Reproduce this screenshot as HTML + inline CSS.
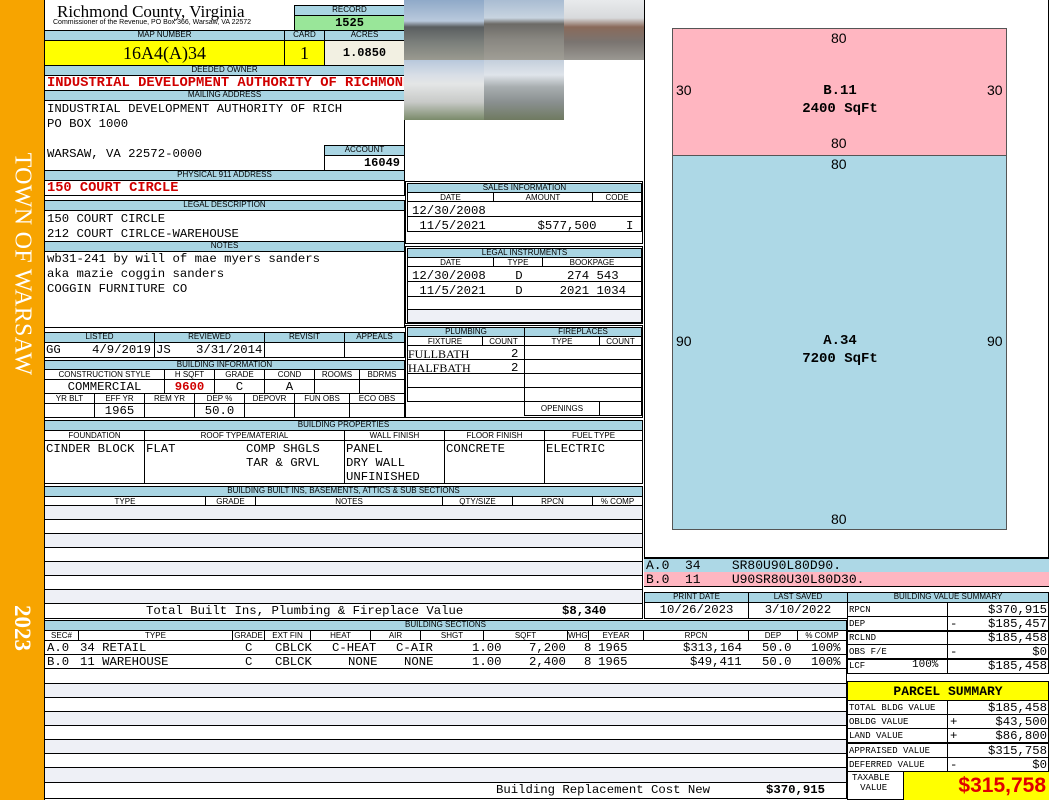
<!DOCTYPE html>
<html><head><meta charset="utf-8"><style>
*{margin:0;padding:0;box-sizing:border-box}
body{width:1050px;height:800px;position:relative;background:#fff;overflow:hidden;font-family:"Liberation Mono",monospace;color:#000}
.a{position:absolute}
.h{position:absolute;background:#a9d5e3;border:1px solid #000;font:8px "Liberation Sans",sans-serif;text-align:center;line-height:8px;white-space:nowrap;overflow:hidden}
.b{position:absolute;border:1px solid #000;background:#fff}
.s{font:8px 'Liberation Sans',sans-serif;text-align:center;line-height:9px}
.t{position:absolute;font:12.3px "Liberation Mono",monospace;white-space:pre;line-height:13px}
.r{color:#d00000;font-weight:bold}
.alt{background:#eef0f6}
.sk{font:14px "Liberation Sans",sans-serif;position:absolute}
.v{position:absolute;font:12.3px "Liberation Mono",monospace;white-space:pre;line-height:14px}
.hl{position:absolute;height:1px;background:#000}
.vl{position:absolute;width:1px;background:#000}
</style></head><body>
<div class="a" style="left:0;top:0;width:44px;height:800px;background:#f7a400"></div>
<div class="a" style="left:22px;top:264px;transform:translate(-50%,-50%) rotate(90deg);color:#fff;font:24px 'Liberation Serif',serif;white-space:nowrap;letter-spacing:0.3px">TOWN OF WARSAW</div>
<div class="a" style="left:22px;top:628px;transform:translate(-50%,-50%) rotate(90deg);color:#fff;font:bold 23px 'Liberation Serif',serif">2023</div>
<div class="a" style="left:44px;top:0;width:1px;height:800px;background:#000"></div>

<div class="a" style="left:57px;top:2px;font:17px 'Liberation Serif',serif;line-height:19px">Richmond County, Virginia</div>
<div class="a" style="left:53px;top:19px;font:7px 'Liberation Sans',sans-serif">Commissioner of the Revenue, PO Box 366, Warsaw, VA 22572</div>
<div class="h" style="left:294px;top:5px;width:111px;height:11px">RECORD</div>
<div class="a" style="left:294px;top:15px;width:111px;height:16px;background:#99e699;border:1px solid #000;font:bold 12px 'Liberation Mono';text-align:center;line-height:14px">1525</div>

<div class="h" style="left:44px;top:30px;width:241px;height:11px">MAP NUMBER</div>
<div class="h" style="left:284px;top:30px;width:41px;height:11px">CARD</div>
<div class="h" style="left:324px;top:30px;width:81px;height:11px">ACRES</div>
<div class="a" style="left:44px;top:40px;width:241px;height:26px;background:#ffff00;border:1px solid #000;font:18px 'Liberation Serif',serif;text-align:center;line-height:24px">16A4(A)34</div>
<div class="a" style="left:284px;top:40px;width:41px;height:26px;background:#ffff00;border:1px solid #000;font:18px 'Liberation Serif',serif;text-align:center;line-height:24px">1</div>
<div class="a" style="left:324px;top:40px;width:81px;height:26px;background:#f2f0e2;border:1px solid #000;font:bold 12px 'Liberation Mono';text-align:center;line-height:24px">1.0850</div>

<div class="h" style="left:44px;top:65px;width:361px;height:11px">DEEDED OWNER</div>
<div class="b" style="left:44px;top:75px;width:361px;height:16px;overflow:hidden"><div class="t r" style="left:2px;top:1px;font-size:13.8px">INDUSTRIAL DEVELOPMENT AUTHORITY OF RICHMOND</div></div>
<div class="h" style="left:44px;top:90px;width:361px;height:11px">MAILING ADDRESS</div>
<div class="b" style="left:44px;top:100px;width:361px;height:71px"></div>
<div class="t" style="left:47px;top:102px;line-height:15px">INDUSTRIAL DEVELOPMENT AUTHORITY OF RICH
PO BOX 1000

WARSAW, VA 22572-0000</div>
<div class="h" style="left:324px;top:145px;width:81px;height:11px">ACCOUNT</div>
<div class="b" style="left:324px;top:155px;width:81px;height:16px;font:bold 12px 'Liberation Mono';text-align:right;padding-right:4px;line-height:14px">16049</div>
<div class="h" style="left:44px;top:170px;width:361px;height:11px">PHYSICAL 911 ADDRESS</div>
<div class="b" style="left:44px;top:180px;width:361px;height:16px"><div class="t r" style="left:2px;top:1px;font-size:13.7px">150 COURT CIRCLE</div></div>

<div class="h" style="left:44px;top:200px;width:361px;height:11px">LEGAL DESCRIPTION</div>
<div class="b" style="left:44px;top:210px;width:361px;height:32px"></div>
<div class="t" style="left:47px;top:212px;line-height:15px">150 COURT CIRCLE
212 COURT CIRLCE-WAREHOUSE</div>
<div class="h" style="left:44px;top:241px;width:361px;height:11px">NOTES</div>
<div class="b" style="left:44px;top:251px;width:361px;height:77px"></div>
<div class="t" style="left:47px;top:252px;line-height:15px">wb31-241 by will of mae myers sanders
aka mazie coggin sanders
COGGIN FURNITURE CO</div>

<div class="h" style="left:44px;top:332px;width:111px;height:11px">LISTED</div>
<div class="h" style="left:154px;top:332px;width:111px;height:11px">REVIEWED</div>
<div class="h" style="left:264px;top:332px;width:81px;height:11px">REVISIT</div>
<div class="h" style="left:344px;top:332px;width:61px;height:11px">APPEALS</div>
<div class="b" style="left:44px;top:342px;width:111px;height:16px"></div>
<div class="b" style="left:154px;top:342px;width:111px;height:16px"></div>
<div class="b" style="left:264px;top:342px;width:81px;height:16px"></div>
<div class="b" style="left:344px;top:342px;width:61px;height:16px"></div>
<div class="t" style="left:46px;top:344px">GG</div>
<div class="t" style="left:92px;top:344px">4/9/2019</div>
<div class="t" style="left:156px;top:344px">JS</div>
<div class="t" style="left:196px;top:344px">3/31/2014</div>

<div class="h" style="left:44px;top:360px;width:361px;height:10px">BUILDING INFORMATION</div>
<div class="b s" style="left:44px;top:369px;width:121px;height:11px">CONSTRUCTION STYLE</div>
<div class="b s" style="left:164px;top:369px;width:51px;height:11px">H SQFT</div>
<div class="b s" style="left:214px;top:369px;width:51px;height:11px">GRADE</div>
<div class="b s" style="left:264px;top:369px;width:51px;height:11px">COND</div>
<div class="b s" style="left:314px;top:369px;width:46px;height:11px">ROOMS</div>
<div class="b s" style="left:359px;top:369px;width:46px;height:11px">BDRMS</div>
<div class="b" style="left:44px;top:379px;width:121px;height:15px;font:12.3px 'Liberation Mono';text-align:center">COMMERCIAL</div>
<div class="b r" style="left:164px;top:379px;width:51px;height:15px;font:bold 12.3px 'Liberation Mono';text-align:center">9600</div>
<div class="b" style="left:214px;top:379px;width:51px;height:15px;font:12.3px 'Liberation Mono';text-align:center">C</div>
<div class="b" style="left:264px;top:379px;width:51px;height:15px;font:12.3px 'Liberation Mono';text-align:center">A</div>
<div class="b" style="left:314px;top:379px;width:46px;height:15px"></div>
<div class="b" style="left:359px;top:379px;width:46px;height:15px"></div>
<div class="b s" style="left:44px;top:393px;width:51px;height:11px">YR BLT</div>
<div class="b s" style="left:94px;top:393px;width:51px;height:11px">EFF YR</div>
<div class="b s" style="left:144px;top:393px;width:51px;height:11px">REM YR</div>
<div class="b s" style="left:194px;top:393px;width:51px;height:11px">DEP %</div>
<div class="b s" style="left:244px;top:393px;width:51px;height:11px">DEPOVR</div>
<div class="b s" style="left:294px;top:393px;width:56px;height:11px">FUN OBS</div>
<div class="b s" style="left:349px;top:393px;width:56px;height:11px">ECO OBS</div>
<div class="b" style="left:44px;top:403px;width:51px;height:15px"></div>
<div class="b" style="left:94px;top:403px;width:51px;height:15px;font:12.3px 'Liberation Mono';text-align:center">1965</div>
<div class="b" style="left:144px;top:403px;width:51px;height:15px"></div>
<div class="b" style="left:194px;top:403px;width:51px;height:15px;font:12.3px 'Liberation Mono';text-align:center">50.0</div>
<div class="b" style="left:244px;top:403px;width:51px;height:15px"></div>
<div class="b" style="left:294px;top:403px;width:56px;height:15px"></div>
<div class="b" style="left:349px;top:403px;width:56px;height:15px"></div>

<div class="a" style="left:404px;top:0;width:80px;height:60px;background:linear-gradient(#8fa9c8 0,#b9c9dc 35%,#5a5e60 45%,#7a7e7a 70%,#9a9a90 100%)"></div>
<div class="a" style="left:484px;top:0;width:80px;height:60px;background:linear-gradient(#a9bcd2 0,#c8d4e0 30%,#6c6a66 40%,#888680 65%,#a09e96 100%)"></div>
<div class="a" style="left:564px;top:0;width:80px;height:60px;background:linear-gradient(#e8eaec 0,#d8dadc 30%,#8a6a5a 45%,#7a7470 70%,#9a9892 100%)"></div>
<div class="a" style="left:404px;top:60px;width:80px;height:60px;background:linear-gradient(#b8c8dc 0,#d8dee6 25%,#e4e6e6 40%,#c8cac8 70%,#7a8a6a 100%)"></div>
<div class="a" style="left:484px;top:60px;width:80px;height:60px;background:linear-gradient(#c4cfdc 0,#dfe4ea 25%,#a8aeb0 45%,#8a9090 70%,#6f7a60 100%)"></div>

<div class="b" style="left:405px;top:181px;width:238px;height:63px"></div>
<div class="h" style="left:407px;top:183px;width:235px;height:10px">SALES INFORMATION</div>
<div class="b s" style="left:407px;top:192px;width:87px;height:10px">DATE</div>
<div class="b s" style="left:493px;top:192px;width:100px;height:10px">AMOUNT</div>
<div class="b s" style="left:592px;top:192px;width:50px;height:10px">CODE</div>
<div class="b" style="left:407px;top:201px;width:235px;height:16px"></div>
<div class="b" style="left:407px;top:216px;width:235px;height:16px"></div>
<div class="t" style="left:412px;top:204px;line-height:15px">12/30/2008
 11/5/2021       $577,500    I</div>

<div class="b" style="left:405px;top:246px;width:238px;height:78px"></div>
<div class="h" style="left:407px;top:248px;width:235px;height:10px">LEGAL INSTRUMENTS</div>
<div class="b s" style="left:407px;top:257px;width:87px;height:10px">DATE</div>
<div class="b s" style="left:493px;top:257px;width:50px;height:10px">TYPE</div>
<div class="b s" style="left:542px;top:257px;width:100px;height:10px">BOOKPAGE</div>
<div class="b" style="left:407px;top:266px;width:235px;height:16px"></div>
<div class="b" style="left:407px;top:281px;width:235px;height:16px"></div>
<div class="b" style="left:407px;top:296px;width:235px;height:14px"></div>
<div class="b alt" style="left:407px;top:309px;width:235px;height:14px"></div>
<div class="t" style="left:412px;top:269px;line-height:15px">12/30/2008    D      274 543
 11/5/2021    D     2021 1034</div>

<div class="b" style="left:405px;top:325px;width:238px;height:93px"></div>
<div class="h" style="left:407px;top:327px;width:118px;height:10px">PLUMBING</div>
<div class="h" style="left:524px;top:327px;width:118px;height:10px">FIREPLACES</div>
<div class="b s" style="left:407px;top:336px;width:76px;height:10px">FIXTURE</div>
<div class="b s" style="left:482px;top:336px;width:43px;height:10px">COUNT</div>
<div class="b s" style="left:524px;top:336px;width:76px;height:10px">TYPE</div>
<div class="b s" style="left:599px;top:336px;width:43px;height:10px">COUNT</div>
<div class="b" style="left:407px;top:345px;width:118px;height:15px"></div>
<div class="b" style="left:407px;top:359px;width:118px;height:15px"></div>
<div class="b" style="left:407px;top:373px;width:118px;height:15px"></div>
<div class="b" style="left:407px;top:387px;width:118px;height:15px"></div>
<div class="b" style="left:524px;top:345px;width:118px;height:15px"></div>
<div class="b" style="left:524px;top:359px;width:118px;height:15px"></div>
<div class="b" style="left:524px;top:373px;width:118px;height:15px"></div>
<div class="b" style="left:524px;top:387px;width:118px;height:15px"></div>
<div class="b s" style="left:524px;top:401px;width:76px;height:15px;line-height:13px">OPENINGS</div>
<div class="b" style="left:599px;top:401px;width:43px;height:15px"></div>
<div class="a" style="left:408px;top:347px;font:12px 'Liberation Serif',serif;line-height:14px">FULLBATH<br>HALFBATH</div>
<div class="t" style="left:511px;top:347px;line-height:14px">2
2</div>

<div class="h" style="left:44px;top:420px;width:599px;height:11px">BUILDING PROPERTIES</div>
<div class="b s" style="left:44px;top:430px;width:101px;height:11px">FOUNDATION</div>
<div class="b s" style="left:144px;top:430px;width:201px;height:11px">ROOF TYPE/MATERIAL</div>
<div class="b s" style="left:344px;top:430px;width:101px;height:11px">WALL FINISH</div>
<div class="b s" style="left:444px;top:430px;width:101px;height:11px">FLOOR FINISH</div>
<div class="b s" style="left:544px;top:430px;width:99px;height:11px">FUEL TYPE</div>
<div class="b" style="left:44px;top:440px;width:101px;height:44px"></div>
<div class="b" style="left:144px;top:440px;width:201px;height:44px"></div>
<div class="b" style="left:344px;top:440px;width:101px;height:44px"></div>
<div class="b" style="left:444px;top:440px;width:101px;height:44px"></div>
<div class="b" style="left:544px;top:440px;width:99px;height:44px"></div>
<div class="t" style="left:46px;top:442px;line-height:14px">CINDER BLOCK</div>
<div class="t" style="left:146px;top:442px;line-height:14px">FLAT</div>
<div class="t" style="left:246px;top:442px;line-height:14px">COMP SHGLS
TAR &amp; GRVL</div>
<div class="t" style="left:346px;top:442px;line-height:14px">PANEL
DRY WALL
UNFINISHED</div>
<div class="t" style="left:446px;top:442px;line-height:14px">CONCRETE</div>
<div class="t" style="left:546px;top:442px;line-height:14px">ELECTRIC</div>

<div class="h" style="left:44px;top:486px;width:599px;height:11px">BUILDING BUILT INS, BASEMENTS, ATTICS &amp; SUB SECTIONS</div>
<div class="b s" style="left:44px;top:496px;width:162px;height:10px">TYPE</div>
<div class="b s" style="left:205px;top:496px;width:51px;height:10px">GRADE</div>
<div class="b s" style="left:255px;top:496px;width:188px;height:10px">NOTES</div>
<div class="b s" style="left:442px;top:496px;width:71px;height:10px">QTY/SIZE</div>
<div class="b s" style="left:512px;top:496px;width:81px;height:10px">RPCN</div>
<div class="b s" style="left:592px;top:496px;width:51px;height:10px">% COMP</div>
<div class="b" style="left:44px;top:505px;width:599px;height:99px"></div>
<div class="a alt" style="left:45px;top:506px;width:597px;height:13px"></div>
<div class="a alt" style="left:45px;top:534px;width:597px;height:13px"></div>
<div class="a alt" style="left:45px;top:562px;width:597px;height:13px"></div>
<div class="a alt" style="left:45px;top:590px;width:597px;height:13px"></div>
<div class="hl" style="left:45px;top:519px;width:597px"></div>
<div class="hl" style="left:45px;top:533px;width:597px"></div>
<div class="hl" style="left:45px;top:547px;width:597px"></div>
<div class="hl" style="left:45px;top:561px;width:597px"></div>
<div class="hl" style="left:45px;top:575px;width:597px"></div>
<div class="hl" style="left:45px;top:589px;width:597px"></div>
<div class="b" style="left:44px;top:603px;width:599px;height:16px"></div>
<div class="t" style="left:146px;top:605px;font-size:12.3px">Total Built Ins, Plumbing &amp; Fireplace Value</div>
<div class="t" style="left:562px;top:605px;font-size:12.3px;font-weight:bold">$8,340</div>

<div class="h" style="left:644px;top:592px;width:105px;height:11px">PRINT DATE</div>
<div class="h" style="left:748px;top:592px;width:100px;height:11px">LAST SAVED</div>
<div class="b" style="left:644px;top:602px;width:105px;height:17px;font:12.3px 'Liberation Mono';text-align:center;line-height:15px">10/26/2023</div>
<div class="b" style="left:748px;top:602px;width:100px;height:17px;font:12.3px 'Liberation Mono';text-align:center;line-height:15px">3/10/2022</div>

<div class="h" style="left:44px;top:620px;width:803px;height:11px">BUILDING SECTIONS</div>
<div class="b s" style="left:44px;top:630px;width:35px;height:11px">SEC#</div>
<div class="b s" style="left:78px;top:630px;width:155px;height:11px">TYPE</div>
<div class="b s" style="left:232px;top:630px;width:33px;height:11px">GRADE</div>
<div class="b s" style="left:264px;top:630px;width:47px;height:11px">EXT FIN</div>
<div class="b s" style="left:310px;top:630px;width:61px;height:11px">HEAT</div>
<div class="b s" style="left:370px;top:630px;width:51px;height:11px">AIR</div>
<div class="b s" style="left:420px;top:630px;width:64px;height:11px">SHGT</div>
<div class="b s" style="left:483px;top:630px;width:85px;height:11px">SQFT</div>
<div class="b s" style="left:567px;top:630px;width:22px;height:11px">WHGT</div>
<div class="b s" style="left:588px;top:630px;width:56px;height:11px">EYEAR</div>
<div class="b s" style="left:643px;top:630px;width:106px;height:11px">RPCN</div>
<div class="b s" style="left:748px;top:630px;width:50px;height:11px">DEP</div>
<div class="b s" style="left:797px;top:630px;width:50px;height:11px">% COMP</div>
<div class="b" style="left:44px;top:640px;width:803px;height:159px"></div>
<div class="hl" style="left:45px;top:654px;width:801px"></div>
<div class="hl" style="left:45px;top:668px;width:801px"></div>
<div class="a alt" style="left:45px;top:684px;width:801px;height:13px"></div>
<div class="a alt" style="left:45px;top:712px;width:801px;height:13px"></div>
<div class="a alt" style="left:45px;top:740px;width:801px;height:13px"></div>
<div class="a alt" style="left:45px;top:768px;width:801px;height:14px"></div>
<div class="hl" style="left:45px;top:683px;width:801px"></div>
<div class="hl" style="left:45px;top:697px;width:801px"></div>
<div class="hl" style="left:45px;top:711px;width:801px"></div>
<div class="hl" style="left:45px;top:725px;width:801px"></div>
<div class="hl" style="left:45px;top:739px;width:801px"></div>
<div class="hl" style="left:45px;top:753px;width:801px"></div>
<div class="hl" style="left:45px;top:767px;width:801px"></div>
<div class="hl" style="left:45px;top:782px;width:801px"></div>
<div class="v" style="left:47px;top:641px">A.0</div><div class="v" style="left:80px;top:641px">34 RETAIL</div>
<div class="v" style="left:245px;top:641px">C</div><div class="v" style="left:275px;top:641px">CBLCK</div>
<div class="v" style="left:332px;top:641px">C-HEAT</div><div class="v" style="left:396px;top:641px">C-AIR</div>
<div class="v" style="left:472px;top:641px">1.00</div><div class="v" style="left:529px;top:641px">7,200</div>
<div class="v" style="left:584px;top:641px">8</div><div class="v" style="left:598px;top:641px">1965</div>
<div class="v" style="left:683px;top:641px">$313,164</div><div class="v" style="left:762px;top:641px">50.0</div><div class="v" style="left:811px;top:641px">100%</div>
<div class="v" style="left:47px;top:655px">B.0</div><div class="v" style="left:80px;top:655px">11 WAREHOUSE</div>
<div class="v" style="left:245px;top:655px">C</div><div class="v" style="left:275px;top:655px">CBLCK</div>
<div class="v" style="left:348px;top:655px">NONE</div><div class="v" style="left:404px;top:655px">NONE</div>
<div class="v" style="left:472px;top:655px">1.00</div><div class="v" style="left:529px;top:655px">2,400</div>
<div class="v" style="left:584px;top:655px">8</div><div class="v" style="left:598px;top:655px">1965</div>
<div class="v" style="left:690px;top:655px">$49,411</div><div class="v" style="left:762px;top:655px">50.0</div><div class="v" style="left:811px;top:655px">100%</div>
<div class="t" style="left:496px;top:784px">Building Replacement Cost New</div>
<div class="t" style="left:766px;top:784px;font-weight:bold">$370,915</div>

<div class="b" style="left:644px;top:-1px;width:405px;height:559px;border-top:none"></div>
<div class="a" style="left:672px;top:28px;width:335px;height:128px;background:#ffb6c1;border:1px solid #555"></div>
<div class="a" style="left:672px;top:155px;width:335px;height:375px;background:#add8e6;border:1px solid #555"></div>
<div class="sk" style="left:831px;top:30px">80</div>
<div class="sk" style="left:676px;top:82px">30</div>
<div class="sk" style="left:987px;top:82px">30</div>
<div class="a" style="left:760px;top:82px;width:160px;text-align:center;font:bold 14px 'Liberation Mono',monospace;line-height:18px">B.11<br>2400 SqFt</div>
<div class="sk" style="left:831px;top:135px">80</div>
<div class="sk" style="left:831px;top:156px">80</div>
<div class="sk" style="left:676px;top:333px">90</div>
<div class="sk" style="left:987px;top:333px">90</div>
<div class="a" style="left:760px;top:332px;width:160px;text-align:center;font:bold 14px 'Liberation Mono',monospace;line-height:18px">A.34<br>7200 SqFt</div>
<div class="sk" style="left:831px;top:511px">80</div>
<div class="a" style="left:644px;top:558px;width:405px;height:15px;background:#add8e6;border-top:1px solid #000"></div>
<div class="a" style="left:644px;top:572px;width:405px;height:15px;background:#ffb6c1;border-bottom:1px solid #000"></div>
<div class="t" style="left:646px;top:559px;font-size:13px;line-height:14px">A.0  34    SR80U90L80D90.
B.0  11    U90SR80U30L80D30.</div>

<div class="h" style="left:847px;top:592px;width:202px;height:11px">BUILDING VALUE SUMMARY</div>
<div class="b" style="left:847px;top:602px;width:202px;height:72px"></div>
<div class="vl" style="left:947px;top:602px;height:72px"></div>
<div class="hl" style="left:848px;top:616px;width:200px"></div>
<div class="hl" style="left:848px;top:630px;width:200px;height:2px"></div>
<div class="hl" style="left:848px;top:644px;width:200px"></div>
<div class="hl" style="left:848px;top:658px;width:200px;height:2px"></div>
<div class="t" style="left:849px;top:603px;font-size:9px;line-height:14px">RPCN
DEP
RCLND
OBS F/E
LCF</div>
<div class="t" style="left:912px;top:659px;font-size:11px">100%</div>
<div class="v" style="right:3px;top:603px;text-align:right">$370,915
$185,457
$185,458
$0
$185,458</div>
<div class="v" style="left:950px;top:617px">-</div>
<div class="v" style="left:950px;top:645px">-</div>

<div class="a" style="left:847px;top:681px;width:202px;height:20px;background:#ffff00;border:1px solid #000;font:bold 13px 'Liberation Mono';text-align:center;line-height:19px">PARCEL SUMMARY</div>
<div class="b" style="left:847px;top:700px;width:202px;height:100px"></div>
<div class="vl" style="left:947px;top:700px;height:72px"></div>
<div class="hl" style="left:848px;top:714px;width:200px"></div>
<div class="hl" style="left:848px;top:728px;width:200px"></div>
<div class="hl" style="left:848px;top:742px;width:200px;height:2px"></div>
<div class="hl" style="left:848px;top:757px;width:200px"></div>
<div class="hl" style="left:848px;top:771px;width:200px"></div>
<div class="t" style="left:849px;top:701px;font-size:9px;line-height:14.2px">TOTAL BLDG VALUE
OBLDG VALUE
LAND VALUE
APPRAISED VALUE
DEFERRED VALUE</div>
<div class="v" style="right:3px;top:701px;text-align:right;line-height:14.2px">$185,458
$43,500
$86,800
$315,758
$0</div>
<div class="v" style="left:950px;top:715px;line-height:14.2px">+
+

-</div>
<div class="t" style="left:852px;top:773px;font-size:9px;line-height:10px;text-align:center">TAXABLE
 VALUE</div>
<div class="a" style="left:903px;top:772px;width:146px;height:28px;background:#ffff00;border-left:1px solid #000;color:#e00000;font:bold 21px 'Liberation Sans',sans-serif;text-align:right;padding-right:3px;line-height:27px">$315,758</div>
</body></html>
